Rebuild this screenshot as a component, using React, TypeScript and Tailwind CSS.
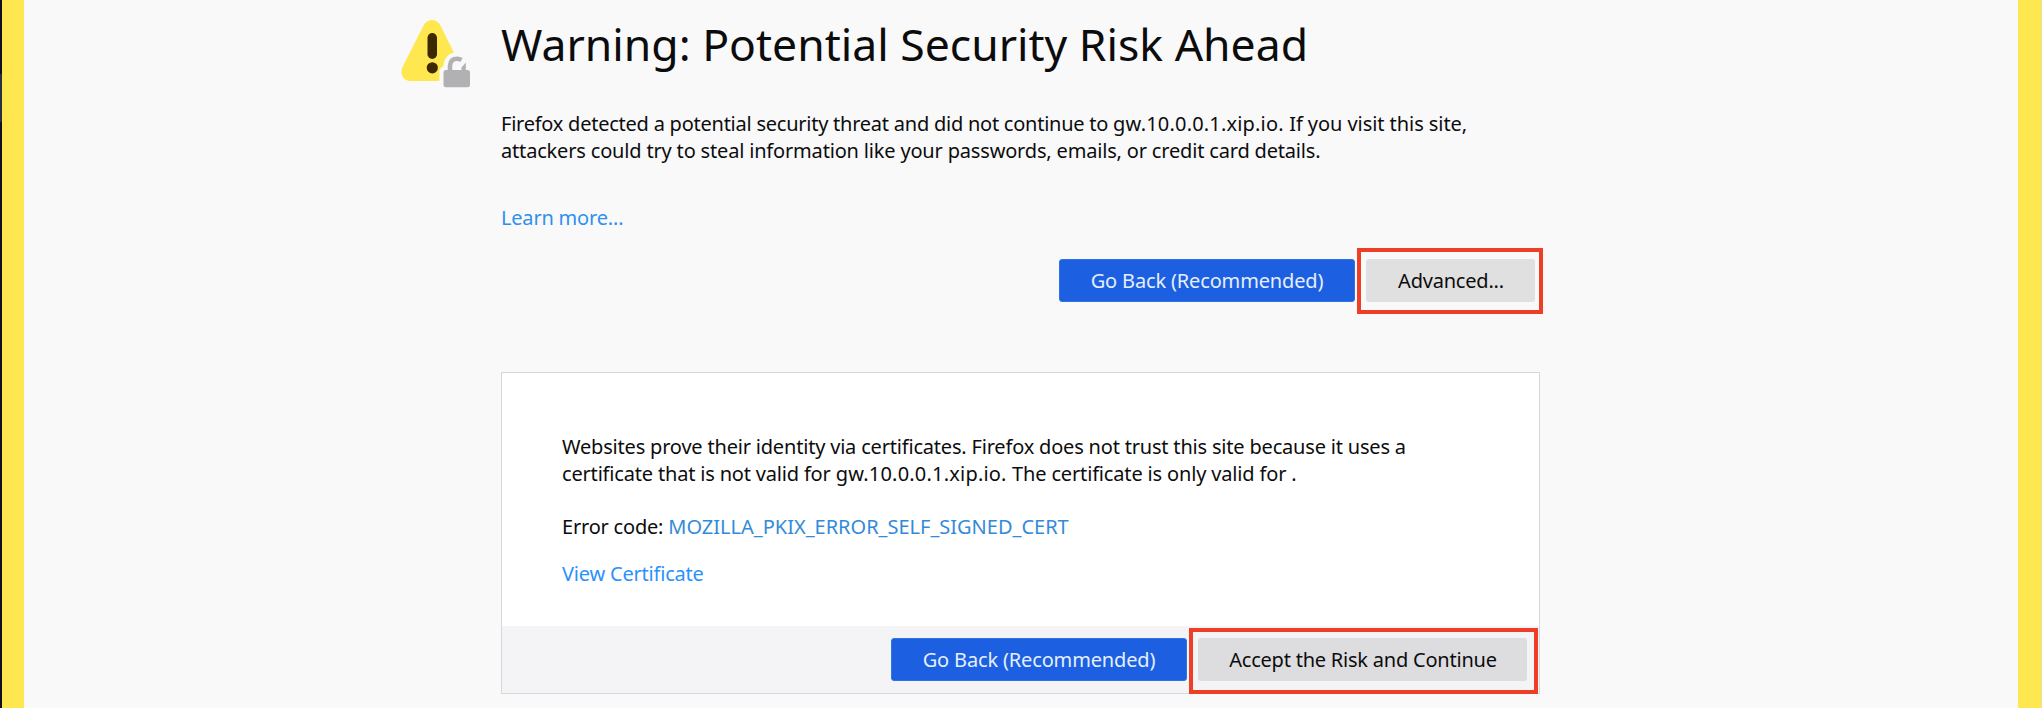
function GoBackButton() {
  return (
    <button className="h-[43px] w-[296px] rounded-[3px] border border-[#2f74e6] bg-[#1c5fe0] text-[#e4efff] tracking-[-0.16px]">
      Go Back (Recommended)
    </button>
  );
}

function WarningIcon() {
  return (
    <svg width="71" height="70" viewBox="0 0 71 70">
      <path d="M22.5 6.500Q25.500 1 31 1T39.500 6.500L60 48Q63 62 51 62H10C2 62-1.500 55 1.500 48Z" fill="#ffe84f" />
      <path d="M38.400 70V51.500Q39 48.500 42.500 47.500V46Q43.500 35 54 33.200L71 30V70Z" fill="#f9f9fa" />
      <rect x="26.500" y="14" width="9.500" height="26" rx="4.750" fill="#3e2800" />
      <circle cx="31.300" cy="48.800" r="5.600" fill="#3e2800" />
      <rect x="42.500" y="51" width="26.500" height="17.300" rx="2.500" fill="#b1b1b3" />
      <path d="M49 52V46.500Q49.500 39.700 56 39.700Q58.500 39.700 60.500 41" fill="none" stroke="#b1b1b3" strokeWidth="4.500" />
      <path d="M60.500 52V48.500L64.800 43.500V52Z" fill="#b1b1b3" />
    </svg>
  );
}

export default function App() {
  return (
    <main className="flex h-[708px] w-[2042px] overflow-hidden bg-[#f9f9fa] font-['Noto_Sans',sans-serif] text-[20px] leading-[27px] text-[#0c0c0d]">
      <div className="w-[2px] shrink-0 bg-[#101020]">
        <div className="h-[74px]" />
        <div className="h-[48px] bg-[#2b3040]" />
      </div>
      <div className="w-[22px] shrink-0 bg-[#ffe84f]" />
      <div className="flex min-w-0 flex-1">
        <div className="w-[477px] shrink-0 pl-[377px] pt-[19px]">
          <WarningIcon />
        </div>
        <div className="w-[1039px] shrink-0">
          <h1 className="pt-[14px] text-[44.5px] leading-[60px]">Warning: Potential Security Risk Ahead</h1>
          <p className="mt-[36px] whitespace-nowrap">
            <span className="tracking-[-0.24px]">Firefox detected a potential security threat and did not continue to </span>
            <span className="tracking-[0.18px]">gw.10.0.0.1.xip.io. </span>
            <span className="tracking-[-0.06px]">If you visit this site,</span>
            <br />
            <span className="tracking-[-0.175px]">attackers could try to steal information like your passwords, emails, or credit card details.</span>
          </p>
          <a className="mt-[40px] block tracking-[-0.2px] text-[#2f90ee]">Learn more…</a>
          <div className="mt-[17px] flex justify-end">
            <div className="pt-[11px]">
              <GoBackButton />
            </div>
            <div className="-mr-[3px] ml-[2px] h-[66px] w-[186px] border-4 border-[#ef3e26] pl-[5px] pr-[4px] pt-[7px]">
              <button className="h-[43px] w-full rounded-[3px] bg-[#e0e0e1] pl-px tracking-[-0.2px]">Advanced...</button>
            </div>
          </div>
          <section className="mt-[58px] h-[322px] w-[1039px] border border-[#d7d7db] bg-white">
            <div className="h-[253px] px-[60px] pt-[60px]">
              <p className="whitespace-nowrap">
                <span className="tracking-[-0.19px]">Websites prove their identity via certificates. Firefox does not trust this site because it uses a</span>
                <br />
                <span className="tracking-[-0.18px]">certificate that is not valid for </span>
                <span className="tracking-[0.2px]">gw.10.0.0.1.xip.io. </span>
                <span className="tracking-[-0.16px]">The certificate is only valid for .</span>
              </p>
              <p className="mt-[26px]">
                <span className="tracking-[-0.2px]">Error code: </span>
                <a className="text-[#348ad8]">MOZILLA_PKIX_ERROR_SELF_SIGNED_CERT</a>
              </p>
              <a className="mt-[20px] block tracking-[-0.2px] text-[#2b91fc]">View Certificate</a>
            </div>
            <div className="flex h-[67px] justify-end bg-[#f4f4f6]">
              <div className="pt-[12px]">
                <GoBackButton />
              </div>
              <div className="ml-[2px] mr-[1px] mt-[2px] h-[66px] w-[349px] shrink-0 border-4 border-[#ef3e26] pl-[5px] pr-[7px] pt-[6px]">
                <button className="h-[43px] w-full rounded-[3px] bg-[#dddddf] pl-px tracking-[-0.22px]">Accept the Risk and Continue</button>
              </div>
            </div>
          </section>
        </div>
      </div>
      <div className="w-[22px] shrink-0 bg-[#ffe84f]" />
      <div className="w-[2px] shrink-0 bg-[#f3e37a]" />
    </main>
  );
}
